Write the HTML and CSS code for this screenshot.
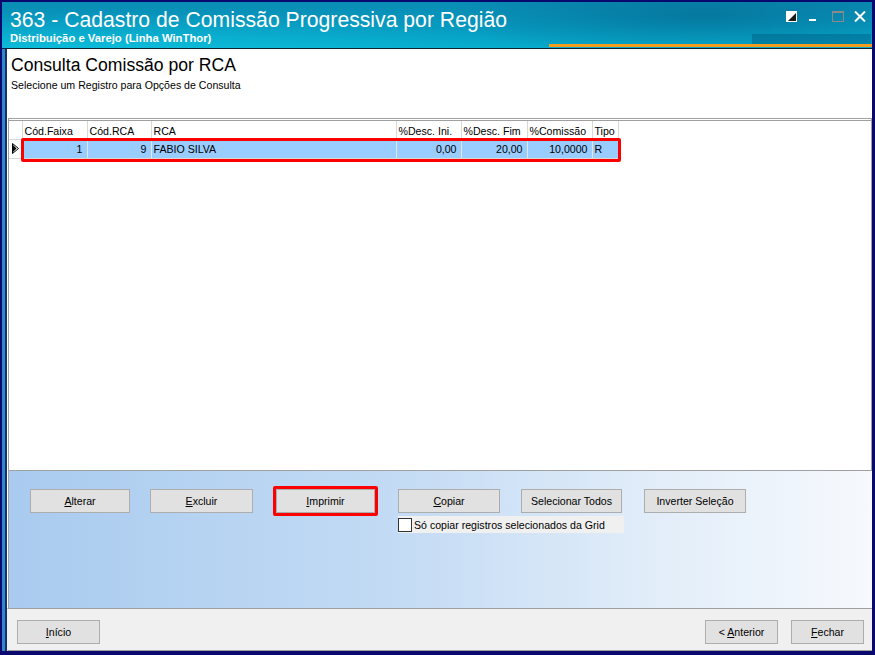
FILE: index.html
```html
<!DOCTYPE html>
<html lang="pt-BR">
<head>
    <meta charset="UTF-8">
    <title>363 - Cadastro de Comissão Progressiva por Região</title>
    <link rel="stylesheet" href="styles.css">
</head>
<body>
    <div class="window">
        <div class="titlebar">
            <div class="title-text">
                <h1>363 - Cadastro de Comissão Progressiva por Região</h1>
                <div class="subtitle">Distribuição e Varejo (Linha WinThor)</div>
            </div>
            <div class="window-controls">
                <svg class="ctl-skin" width="11" height="11" viewBox="0 0 11 11">
                    <rect x="0" y="0" width="11" height="11" fill="#fff"/>
                    <polygon points="10,2 10,10 2,10" fill="#1a1a1a"/>
                </svg>
                <svg class="ctl-min" width="8" height="11" viewBox="0 0 8 11">
                    <rect x="0" y="8" width="7" height="2" fill="#fff"/>
                </svg>
                <svg class="ctl-max" width="12" height="11" viewBox="0 0 12 11">
                    <rect x="0.5" y="0.5" width="11" height="10" fill="none" stroke="#8a8a8a"/>
                    <rect x="0" y="0" width="12" height="2" fill="#8a8a8a"/>
                </svg>
                <svg class="ctl-close" width="12" height="11" viewBox="0 0 12 11">
                    <path d="M1 0.5 L11 10.5 M11 0.5 L1 10.5" stroke="#fff" stroke-width="2"/>
                </svg>
            </div>
        </div>

        <div class="client">
            <div class="page-head">
                <h2>Consulta Comissão por RCA</h2>
                <p>Selecione um Registro para Opções de Consulta</p>
            </div>

            <div class="grid">
                <table>
                    <colgroup>
                        <col class="c-ind">
                        <col class="c-faixa">
                        <col class="c-rca">
                        <col class="c-nome">
                        <col class="c-ini">
                        <col class="c-fim">
                        <col class="c-com">
                        <col class="c-tipo">
                    </colgroup>
                    <thead>
                        <tr>
                            <th></th>
                            <th>Cód.Faixa</th>
                            <th>Cód.RCA</th>
                            <th>RCA</th>
                            <th>%Desc. Ini.</th>
                            <th>%Desc. Fim</th>
                            <th>%Comissão</th>
                            <th>Tipo</th>
                        </tr>
                    </thead>
                    <tbody>
                        <tr class="selected">
                            <td class="indicator">
                                <svg width="7" height="11" viewBox="0 0 7 11">
                                    <polygon points="0.5,0.5 6.5,5.5 0.5,10.5" fill="#fff" stroke="#000"/>
                                    <polygon points="1,2 4.5,5.5 1,9" fill="#000"/>
                                </svg>
                            </td>
                            <td class="num">1</td>
                            <td class="num">9</td>
                            <td>FABIO SILVA</td>
                            <td class="num">0,00</td>
                            <td class="num">20,00</td>
                            <td class="num">10,0000</td>
                            <td>R</td>
                        </tr>
                    </tbody>
                </table>
                <div class="mark mark-row"></div>
            </div>

            <div class="actions">
                <div class="action-row">
                    <button class="btn btn-alterar"><u>A</u>lterar</button>
                    <button class="btn btn-excluir"><u>E</u>xcluir</button>
                    <span class="marked"><button class="btn"><u>I</u>mprimir</button></span>
                    <div class="copy-group">
                        <button class="btn"><u>C</u>opiar</button>
                        <label class="check"><span class="box"></span>Só copiar registros selecionados da Grid</label>
                    </div>
                    <button class="btn btn-todos">Selecionar Todos</button>
                    <button class="btn btn-inverter">Inverter Seleção</button>
                </div>
            </div>

            <div class="footer">
                <button class="btn btn-nav"><u>I</u>nício</button>
                <div class="footer-right">
                    <button class="btn btn-nav">&lt; <u>A</u>nterior</button>
                    <button class="btn btn-nav"><u>F</u>echar</button>
                </div>
            </div>
        </div>
    </div>
</body>
</html>
```

FILE: styles.css
```css
:root {
    --frame: #08086e;
    --btn-face: #e1e1e1;
    --btn-border: #adadad;
    --row-selected: #99ccff;
    --mark: #ff0000;
}

* {
    margin: 0;
    padding: 0;
    box-sizing: border-box;
}

body {
    font-family: 'Liberation Sans', Arial, sans-serif;
    font-size: 10.6px;
    background: var(--frame);
    width: 875px;
    height: 655px;
    overflow: hidden;
    color: #000;
}

.window {
    width: 875px;
    height: 655px;
    display: flex;
    flex-direction: column;
    border-top: 2px solid var(--frame);
    border-left: 2px solid var(--frame);
    border-right: 3px solid var(--frame);
    border-bottom: 4px solid var(--frame);
}

/* title bar */
.titlebar {
    position: relative;
    height: 47px;
    flex: none;
    display: flex;
    justify-content: space-between;
    align-items: flex-start;
    padding: 5px 4px 0 8px;
    color: #fff;
    background:
        radial-gradient(ellipse 260px 40px at 700px 14px, rgba(0, 70, 110, 0.35), transparent),
        radial-gradient(ellipse 500px 50px at 80px 60px, rgba(20, 210, 235, 0.6), transparent),
        linear-gradient(180deg, #0a8db5 0%, #0797bd 45%, #06aacb 100%);
    border-bottom: 1px solid #0a2438;
}

/* orange stripe along the bottom right of the bar */
.titlebar::after {
    content: '';
    position: absolute;
    left: 547px;
    right: 0;
    bottom: 1px;
    height: 3px;
    background: #f39c1e;
}

.titlebar::before {
    content: '';
    position: absolute;
    left: 750px;
    right: 1px;
    top: 32px;
    height: 11px;
    background: rgba(0, 90, 130, 0.45);
}

.title-text h1 {
    font-size: 21.2px;
    font-weight: normal;
    line-height: 25px;
}

.subtitle {
    font-size: 11.3px;
    font-weight: bold;
    line-height: 12px;
}

.window-controls {
    display: flex;
    align-items: center;
    padding-top: 4px;
}

.window-controls svg {
    display: block;
}

.ctl-skin { margin-right: 12px; }
.ctl-min { margin-right: 15px; }
.ctl-max { margin-right: 10px; }
.ctl-close { margin-right: 2px; }

/* client area */
.client {
    flex: 1;
    display: flex;
    flex-direction: column;
    background: #fff;
    border-left: 3px solid #2f86cc;
    box-shadow: inset 2px 0 0 #18306a;
    padding-left: 2px;
}

.page-head {
    height: 69px;
    flex: none;
    padding: 6px 0 0 3px;
    border-left: 1px solid #fff;
}

.page-head h2 {
    font-size: 17.6px;
    font-weight: normal;
    line-height: 21px;
}

.page-head p {
    font-size: 10.6px;
    line-height: 13px;
    margin-top: 3px;
}

/* data grid */
.grid {
    position: relative;
    flex: none;
    height: 353px;
    margin-left: 1px;
    border-top: 3px double #a0a0a0;
    border-left: 1px solid #a0a0a0;
    border-bottom: 1px solid #a0a0a0;
    border-right: 1px solid #a0a0a0;
    background: #fff;
}

.grid table {
    border-collapse: collapse;
    table-layout: fixed;
    width: 609px;
}

.c-ind { width: 13px; }
.c-faixa { width: 65px; }
.c-rca { width: 64px; }
.c-nome { width: 245px; }
.c-ini { width: 65px; }
.c-fim { width: 66px; }
.c-com { width: 65px; }
.c-tipo { width: 26px; }

.grid th {
    height: 18px;
    font-weight: normal;
    text-align: left;
    padding: 3px 2px 0;
    border-right: 1px solid #d8d8d8;
    border-bottom: 1px solid #d8d8d8;
    white-space: nowrap;
    overflow: hidden;
}

.grid td {
    height: 19px;
    padding: 0 2px;
    border-right: 1px solid #e6e6e6;
    border-bottom: 1px solid #d8d8d8;
    white-space: nowrap;
}

.grid .selected td {
    background: var(--row-selected);
}

.grid .selected td.indicator {
    background: #fff;
    padding: 0 0 0 3px;
}

.indicator svg {
    display: block;
}

.grid td.num {
    text-align: right;
    padding-right: 4px;
}

.mark {
    position: absolute;
    border: 3px solid var(--mark);
    border-radius: 2px;
}

.mark-row {
    left: 12px;
    top: 17px;
    width: 600px;
    height: 24px;
}

/* action panel */
.actions {
    flex: 1;
    padding: 18px 0 0 21px;
    background: linear-gradient(90deg, #a9cbef 0%, #c3dbf4 45%, #e2edf9 75%, #f6f9fd 100%);
    border-left: 1px solid #a0a0a0;
    margin-left: 1px;
}

.action-row {
    display: flex;
    align-items: flex-start;
}

.btn {
    font-family: 'Liberation Sans', Arial, sans-serif;
    font-size: 10.6px;
    height: 24px;
    width: 101px;
    background: var(--btn-face);
    border: 1px solid var(--btn-border);
    color: #000;
    flex: none;
}

.btn-alterar {
    width: 100px;
    margin-right: 20px;
}

.btn-excluir {
    width: 103px;
    margin-right: 20px;
}

.marked {
    display: block;
    border: 3px solid var(--mark);
    border-radius: 2px;
    margin-top: -3px;
    margin-right: 20px;
}

.marked .btn {
    display: block;
    width: 99px;
}

.copy-group {
    display: flex;
    flex-direction: column;
    width: 102px;
    margin-right: 21px;
}

.copy-group .btn {
    width: 102px;
}

.btn-todos {
    width: 101px;
    margin-right: 22px;
}

.btn-inverter {
    width: 102px;
}

.check {
    display: flex;
    align-items: center;
    gap: 2px;
    width: 226px;
    height: 17px;
    margin-top: 3px;
    background: #f0f0f0;
    white-space: nowrap;
}

.check .box {
    width: 14px;
    height: 14px;
    background: #fff;
    border: 1px solid #333;
    flex: none;
}

/* footer */
.footer {
    flex: none;
    height: 43px;
    display: flex;
    justify-content: space-between;
    align-items: flex-start;
    padding: 11px 8px 0 9px;
    background: #f0f0f0;
    border-top: 1px solid #a0a0a0;
    border-bottom: 1px solid #a0a0a0;
    border-left: 1px solid #f0f0f0;
}

.footer-right {
    display: flex;
    gap: 13px;
}

.btn-nav {
    width: 83px;
    height: 24px;
}

.footer-right .btn-nav {
    width: 73px;
}
```
